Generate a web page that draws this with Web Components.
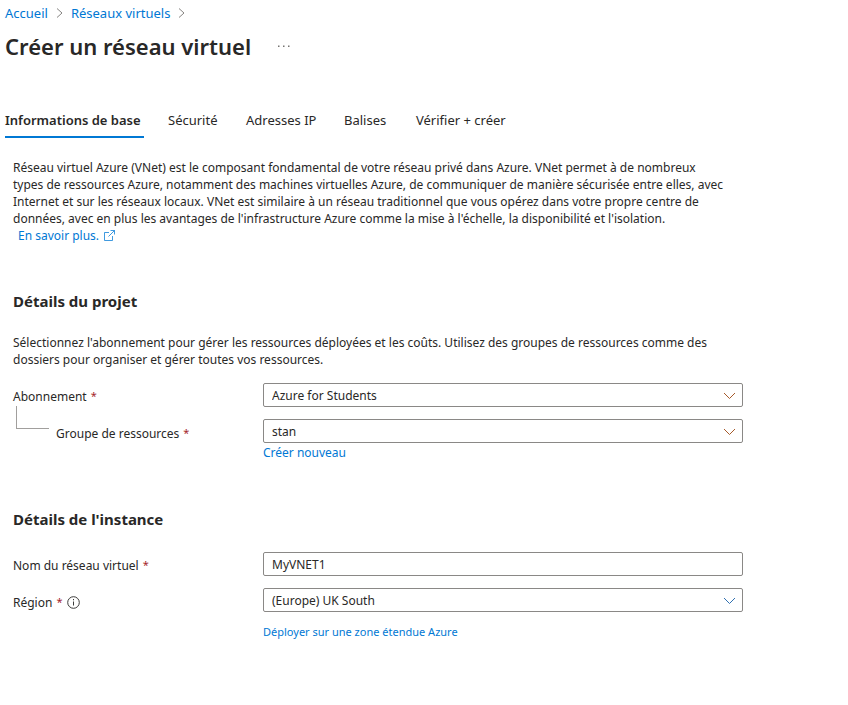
<!DOCTYPE html>
<html lang="fr">
<head>
<meta charset="utf-8">
<meta name="viewport" content="width=device-width, initial-scale=1">
<title>Créer un réseau virtuel</title>
<style>
  :root { --link: #0078d4; --ink: #292827; --line: #8a8886; --required: #a4262c; }
  body { margin: 0; background: #fff; color: var(--ink); font: 12px/17px "Noto Sans", "Open Sans", sans-serif; }
</style>
</head>
<body>
<vnet-page></vnet-page>

<template id="crumbs-tpl">
  <style>
    :host { display: block; }
    nav { display: flex; align-items: center; gap: 8px; font-size: 13px; line-height: 18px; }
    a { color: var(--link); text-decoration: none; }
    svg { width: 7px; height: 10px; fill: none; stroke: #868482; }
  </style>
  <nav aria-label="Fil d'Ariane">
    <a href="#accueil">Accueil</a>
    <svg viewBox="0 0 7 10"><path d="M1 .5 6 5 1 9.500"/></svg>
    <a href="#reseaux">Réseaux virtuels</a>
    <svg viewBox="0 0 7 10"><path d="M1 .5 6 5 1 9.500"/></svg>
  </nav>
</template>

<template id="title-tpl">
  <style>
    :host { display: flex; align-items: center; gap: 24px; margin-top: 8px; }
    h1 { margin: 0; font-size: 22px; line-height: 32px; font-weight: 600; }
    button { border: 0; background: none; padding: 0 3px; display: flex; height: 16px; align-items: center; }
    svg { width: 12px; height: 2px; fill: #767472; }
  </style>
  <h1><slot></slot></h1>
  <button type="button" aria-label="Plus d'actions"><svg viewBox="0 0 12 2"><path d="M0 .5h1.500V2H0zM5 .5h1.500V2H5zM10 .5h1.500V2H10z"/></svg></button>
</template>

<template id="tabs-tpl">
  <style>
    :host { display: block; margin-top: 43px; }
    div { display: grid; grid-template-columns: 139px 54px 74px 48px auto; justify-content: start; column-gap: 24px; }
    button { font: inherit; font-size: 13px; line-height: 20px; color: inherit; text-align: left; white-space: nowrap; background: none; border: 0; border-bottom: 2px solid transparent; padding: 5px 0 6px; }
    [aria-selected="true"] { font-weight: 600; border-color: var(--link); }
  </style>
  <div role="tablist">
    <button role="tab" aria-selected="true">Informations de base</button>
    <button role="tab" aria-selected="false">Sécurité</button>
    <button role="tab" aria-selected="false">Adresses IP</button>
    <button role="tab" aria-selected="false">Balises</button>
    <button role="tab" aria-selected="false">Vérifier + créer</button>
  </div>
</template>

<template id="section-tpl">
  <style>
    :host { display: block; }
    h2 { margin: 0 0 23px; font-size: 15px; line-height: 20px; font-weight: 700; }
    ::slotted(p) { margin: 0 0 15px; max-width: 713px; }
    .rows { display: grid; row-gap: 12px; }
  </style>
  <h2></h2>
  <slot name="intro"></slot>
  <div class="rows"><slot></slot></div>
</template>

<template id="field-tpl">
  <style>
    :host { display: grid; grid-template-columns: 250px minmax(0, 480px); align-items: start; }
    .label { display: flex; align-items: center; gap: 4px; padding-top: 5px; }
    .star { color: var(--required); font-size: 11px; line-height: 15px; align-self: flex-start; }
    :host([nested]) .label, :host([info]) .label { padding-top: 6px; }
    :host([nested]) .label { padding-left: 43px; position: relative; }
    :host([nested]) .label::before { content: ""; position: absolute; left: 3px; bottom: 13px; width: 32px; height: 22px; border: solid #a19f9d; border-width: 0 0 1px 1px; }
    .box { position: relative; }
    select, input { display: block; box-sizing: border-box; width: 100%; height: 24px; margin: 0; padding: 0 8px; border: 1px solid var(--line); border-radius: 2px; background: #fff; color: inherit; font: inherit; appearance: none; }
    select { padding-right: 32px; }
    .chevron { position: absolute; right: 7px; top: 9px; width: 13px; height: 8px; fill: none; stroke: var(--chevron, #a65a2a); pointer-events: none; }
    .info { width: 13px; height: 13px; margin-left: 1px; fill: none; stroke: #3b3a39; }
    ::slotted(a) { display: block; width: fit-content; color: var(--link); text-decoration: none; }
  </style>
  <div class="label"><label for="c"></label><span class="star">*</span></div>
  <div><div class="box"></div><slot></slot></div>
</template>

<template id="page-tpl">
  <style>
    :host { display: block; padding: 4px 5px; }
    main { padding: 21px 8px 0; }
    a { color: var(--link); text-decoration: none; }
    .lead { margin: 0; max-width: 713px; }
    .more { display: flex; align-items: center; gap: 5px; margin-left: 5px; width: fit-content; }
    .more svg { width: 11px; height: 11px; fill: none; stroke: var(--link); stroke-opacity: .75; }
    .project { margin-top: 47px; }
    .instance { margin-top: 48px; }
    .create { margin-top: 1px; }
    .zone { margin-top: 11px; font-size: 11px; }
    .region { --chevron: #2f6fb0; }
  </style>
  <bread-crumbs></bread-crumbs>
  <page-title>Créer un réseau virtuel</page-title>
  <tab-bar></tab-bar>
  <main>
    <p class="lead">Réseau virtuel Azure (VNet) est le composant fondamental de votre réseau privé dans Azure. VNet permet à de nombreux types de ressources Azure, notamment des machines virtuelles Azure, de communiquer de manière sécurisée entre elles, avec Internet et sur les réseaux locaux. VNet est similaire à un réseau traditionnel que vous opérez dans votre propre centre de données, avec en plus les avantages de l'infrastructure Azure comme la mise à l'échelle, la disponibilité et l'isolation.</p>
    <a class="more" href="#savoir">En savoir plus. <svg viewBox="0 0 11 11"><path d="M5 2.500H.5v8h8V6M6.500.5h4v4M10.500.5 4.500 6.500"/></svg></a>
    <form-section class="project" heading="Détails du projet">
      <p slot="intro">Sélectionnez l'abonnement pour gérer les ressources déployées et les coûts. Utilisez des groupes de ressources comme des dossiers pour organiser et gérer toutes vos ressources.</p>
      <form-field label="Abonnement" type="select" value="Azure for Students"></form-field>
      <form-field label="Groupe de ressources" type="select" value="stan" nested><a class="create" href="#nouveau">Créer nouveau</a></form-field>
    </form-section>
    <form-section class="instance" heading="Détails de l'instance">
      <form-field label="Nom du réseau virtuel" type="text" value="MyVNET1"></form-field>
      <form-field class="region" label="Région" type="select" value="(Europe) UK South" info><a class="zone" href="#zone">Déployer sur une zone étendue Azure</a></form-field>
    </form-section>
  </main>
</template>

<script>
  class Base extends HTMLElement {
    constructor() {
      super();
      this.attachShadow({ mode: "open" }).append(
        document.getElementById(this.constructor.tpl).content.cloneNode(true));
    }
  }
  const SVG_CHEVRON = '<svg class="chevron" viewBox="0 0 13 8"><path d="M1 1l5.500 5.500L12 1"/></svg>';
  const SVG_INFO = '<svg class="info" viewBox="0 0 13 13" role="img" aria-label="Informations"><circle cx="6.500" cy="6.500" r="5.800"/><path d="M6.500 5.500v4M6.500 3v1.300"/></svg>';

  customElements.define("bread-crumbs", class extends Base { static tpl = "crumbs-tpl"; });
  customElements.define("page-title", class extends Base { static tpl = "title-tpl"; });
  customElements.define("tab-bar", class extends Base { static tpl = "tabs-tpl"; });
  customElements.define("form-section", class extends Base {
    static tpl = "section-tpl";
    connectedCallback() { this.shadowRoot.querySelector("h2").textContent = this.getAttribute("heading"); }
  });
  customElements.define("form-field", class extends Base {
    static tpl = "field-tpl";
    connectedCallback() {
      const root = this.shadowRoot, value = this.getAttribute("value");
      root.querySelector("label").textContent = this.getAttribute("label");
      if (this.hasAttribute("info")) root.querySelector(".label").insertAdjacentHTML("beforeend", SVG_INFO);
      const isSelect = this.getAttribute("type") === "select";
      const control = document.createElement(isSelect ? "select" : "input");
      control.id = "c";
      control.required = true;
      if (isSelect) control.add(new Option(value)); else control.value = value;
      const box = root.querySelector(".box");
      box.append(control);
      if (isSelect) box.insertAdjacentHTML("beforeend", SVG_CHEVRON);
    }
  });
  customElements.define("vnet-page", class extends Base { static tpl = "page-tpl"; });
</script>
</body>
</html>
